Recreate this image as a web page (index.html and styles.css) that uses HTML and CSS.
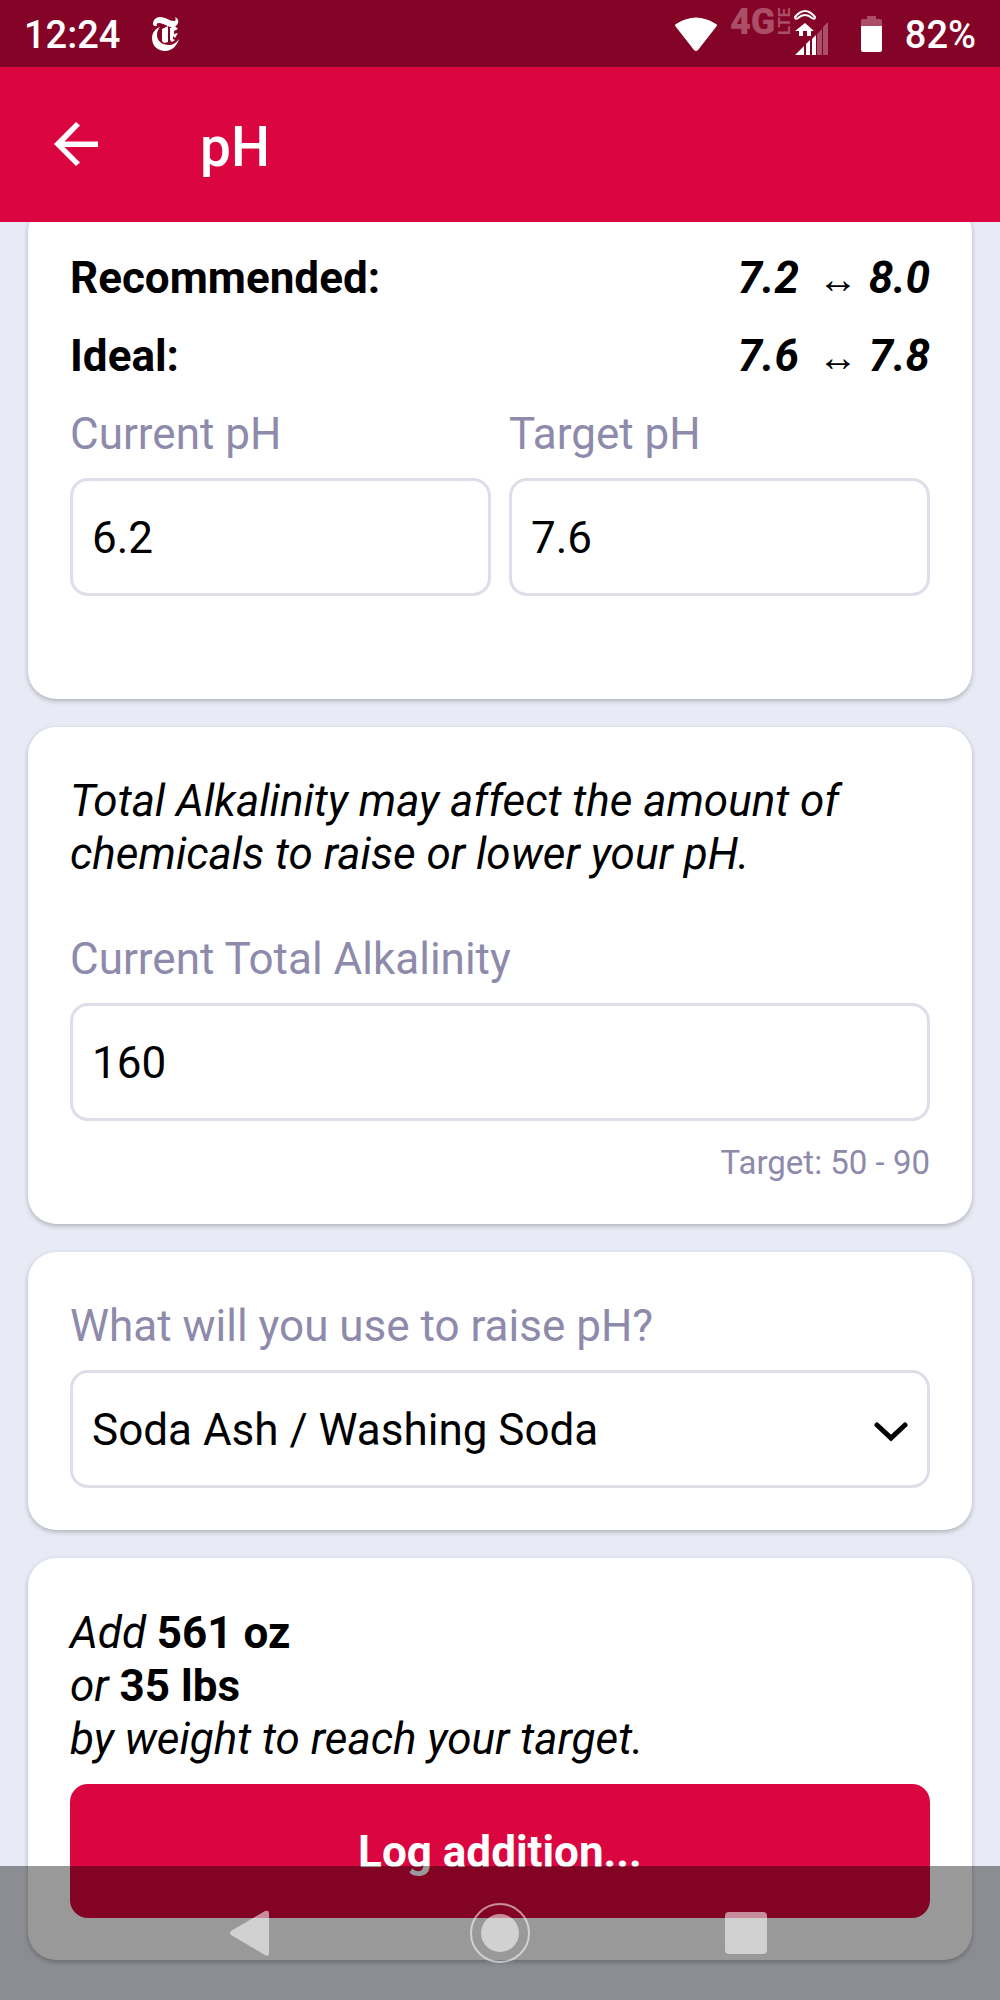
FILE: index.html
```html
<!DOCTYPE html>
<html lang="en">
  <head>
    <meta charset="UTF-8" />
    <meta name="viewport" content="width=device-width, initial-scale=1.0" />
    <title>pH</title>
    <link rel="stylesheet" href="styles.css" />
  </head>
  <body>
    <header class="header">
      <div class="status">
        <span class="clock">12:24</span>
        <svg class="news" width="28" height="36" viewBox="0 0 28 36">
          <path d="M1 8C1 4 4 1 8 1c6 0 9 4 14 4 2 0 2-2 1-4 5 2 4 8-1 10-6 1-10-4-15-4-2 0-3 1-2 3-2 0-4 0-4-2z" fill="#fff" />
          <path d="M8 11C3 13 0 17 0 22c0 8 6 13 13 13 7 0 12-5 14-12-3 4-6 6-10 6-7 0-12-4-12-10 0-3 1-6 3-8z" fill="#fff" />
          <path d="M10 13l6-3v16l-4 1-2-2zM18 12l5-2 3 3-4 2v3l4-1-3 5-2-2v3l2 1-3 2-2-2z" fill="#fff" />
        </svg>
        <svg class="wifi" width="42" height="34" viewBox="0 0 42 34">
          <path d="M1 7Q21-6 41 7Q43 8 41 10L23 33Q21 35 19 33L1 10Q-1 8 1 7z" fill="#fff" />
        </svg>
        <svg class="signal" width="100" height="56" viewBox="0 0 100 56">
          <g class="faded">
            <text x="1" y="34" class="net">4G</text>
            <text transform="translate(61 35) rotate(-90)" class="lte">LTE</text>
            <path d="M88 34l5-5v26h-5zM94 27l5-5v33h-5z" />
          </g>
          <path d="M66 17Q76 5 86 17Q86 20 83 18Q76 12 69 18Q66 20 66 17z" fill="none" stroke="#fff" stroke-width="2" />
          <path d="M76 23l9 8h-3v5h-4v-5h-4v5h-4v-5h-4z" fill="#fff" />
          <path d="M66 55l9-9v9zM77 44l4-4v15h-4zM83 39l4-4v20h-4z" fill="#fff" />
        </svg>
        <svg class="battery" width="21" height="36" viewBox="0 0 21 36">
          <path d="M6 0h9v3h4q2 0 2 2v5H0V5q0-2 2-2h4z" class="faded" />
          <path d="M0 10h21v24q0 2-2 2H2q-2 0-2-2z" fill="#fff" />
        </svg>
        <span class="percent">82%</span>
      </div>
      <div class="appbar">
        <button class="back" aria-label="Back">
          <svg width="44" height="44" viewBox="0 0 44 44">
            <path d="M44 19.5v5.5H10.5L26 40.5 22 44 0 22 22 0l4 3.5-15.5 16z" fill="#fff" />
          </svg>
        </button>
        <h1>pH</h1>
      </div>
    </header>

    <main class="cards">
      <section class="card">
        <div class="range">
          <strong>Recommended:</strong>
          <strong class="value">7.2 <span class="arrow">↔</span> 8.0</strong>
        </div>
        <div class="range">
          <strong>Ideal:</strong>
          <strong class="value">7.6 <span class="arrow">↔</span> 7.8</strong>
        </div>
        <div class="fields">
          <div class="field">
            <label for="current">Current pH</label>
            <input id="current" type="text" inputmode="decimal" value="6.2" />
          </div>
          <div class="field">
            <label for="target">Target pH</label>
            <input id="target" type="text" inputmode="decimal" value="7.6" />
          </div>
        </div>
        <p class="hint"></p>
      </section>

      <section class="card">
        <p class="note">Total Alkalinity may affect the amount of chemicals to raise or lower your pH.</p>
        <div class="field">
          <label for="alkalinity">Current Total Alkalinity</label>
          <input id="alkalinity" type="text" inputmode="numeric" value="160" />
        </div>
        <p class="hint">Target: 50 - 90</p>
      </section>

      <section class="card">
        <div class="field">
          <label for="chemical">What will you use to raise pH?</label>
          <div class="select">
            <select id="chemical">
              <option>Soda Ash / Washing Soda</option>
            </select>
            <svg class="chevron" width="34" height="20" viewBox="0 0 34 20">
              <path d="M3 3l14 13L31 3" fill="none" stroke="#000" stroke-width="5" stroke-linecap="round" />
            </svg>
          </div>
        </div>
      </section>

      <section class="card">
        <p class="result">
          Add <b>561 oz</b><br />
          or <b>35 lbs</b><br />
          by weight to reach your target.
        </p>
        <button class="log">Log addition...</button>
      </section>
    </main>

    <nav class="navbar">
      <button aria-label="Back">
        <svg width="62" height="62" viewBox="0 0 62 62">
          <path d="M12 29L46 9q4-1 4 2v40q0 4-4 2L12 33q-2-2 0-4z" />
        </svg>
      </button>
      <button aria-label="Home">
        <svg width="62" height="62" viewBox="0 0 62 62">
          <circle cx="31" cy="31" r="19" />
          <circle cx="31" cy="31" r="29" class="ring" />
        </svg>
      </button>
      <button aria-label="Overview">
        <svg width="62" height="62" viewBox="0 0 62 62">
          <rect x="6" y="10" width="42" height="42" rx="4" />
        </svg>
      </button>
    </nav>
  </body>
</html>
```
FILE: styles.css
```css
*,
::before,
::after {
  box-sizing: border-box;
}

body {
  margin: 0;
  min-height: 100vh;
  font-family: Roboto, "Liberation Sans", sans-serif;
  font-size: 44px;
  line-height: 53px;
  color: #000;
  background-color: #e8ebf5;
}

h1,
p {
  margin: 0;
}

button {
  padding: 0;
  border: 0;
  font: inherit;
  color: inherit;
  background: none;
}

svg {
  display: block;
  flex: none;
}

/* header */

.header {
  position: sticky;
  top: 0;
  z-index: 1;
  color: #fff;
  background-color: #db063f;
}

.status {
  display: flex;
  align-items: center;
  height: 67px;
  padding: 0 24px;
  font-size: 38px;
  font-weight: 500;
  background-color: #830426;
}

.clock,
.percent {
  padding-top: 4px;
}

.news {
  margin-left: 32px;
}

.wifi {
  margin-left: auto;
}

.signal {
  align-self: flex-start;
  margin-left: 12px;
}

.battery {
  margin: 0 23px 0 32px;
}

.faded {
  fill: #ab4f68;
}

.net {
  font-size: 36px;
  font-weight: 900;
}

.lte {
  font-size: 17px;
  font-weight: 700;
}

.appbar {
  display: flex;
  align-items: center;
  height: 155px;
  padding: 0 54px 2px;
}

.appbar h1 {
  padding-top: 8px;
  margin-left: 102px;
  font-size: 55px;
  font-weight: 500;
}

/* cards */

.cards {
  display: flex;
  flex-direction: column;
  gap: 28px;
  margin-top: -18px;
  padding: 0 28px 40px;
}

.card {
  padding: 42px;
  border-radius: 28px;
  background-color: #fff;
  box-shadow: 0 2px 5px rgba(0, 0, 0, 0.25);
}

.range {
  display: flex;
  justify-content: space-between;
  padding: 6px 0 19px;
}

.value {
  font-style: italic;
}

.arrow {
  margin-left: 8px;
  font-family: "Liberation Sans", sans-serif;
  font-size: 40px;
  font-style: normal;
  line-height: 1;
}

.fields {
  display: flex;
  gap: 18px;
}

.field {
  flex: 1;
  min-width: 0;
}

label {
  display: block;
  padding: 6px 0 17px;
  color: #8e8aab;
}

input,
select {
  display: block;
  width: 100%;
  height: 118px;
  padding: 2px 19px 0;
  border: 3px solid #dfdde9;
  border-radius: 18px;
  font: inherit;
  color: inherit;
  background-color: #fff;
  appearance: none;
}

.select {
  position: relative;
}

.chevron {
  position: absolute;
  top: 50%;
  right: 22px;
  margin-top: -7px;
  pointer-events: none;
}

.hint {
  min-height: 61px;
  padding-top: 22px;
  font-size: 33px;
  line-height: 39px;
  text-align: right;
  color: #8e8aab;
}

.note {
  padding: 6px 0 46px;
  font-style: italic;
}

.result {
  padding: 7px 0 18px;
  font-style: italic;
}

.result b {
  font-style: normal;
}

.log {
  display: block;
  width: 100%;
  height: 134px;
  padding-top: 3px;
  border-radius: 18px;
  font-weight: 700;
  color: #fff;
  background-color: #db063f;
}

/* system navigation over the page */

.navbar {
  position: fixed;
  right: 0;
  bottom: 0;
  left: 0;
  z-index: 2;
  display: flex;
  justify-content: space-around;
  align-items: center;
  height: 134px;
  padding: 0 125px;
  background-color: rgba(0, 0, 0, 0.4);
}

.navbar svg {
  fill: rgba(255, 255, 255, 0.55);
}

.navbar .ring {
  fill: none;
  stroke: rgba(255, 255, 255, 0.55);
  stroke-width: 2;
}
```
